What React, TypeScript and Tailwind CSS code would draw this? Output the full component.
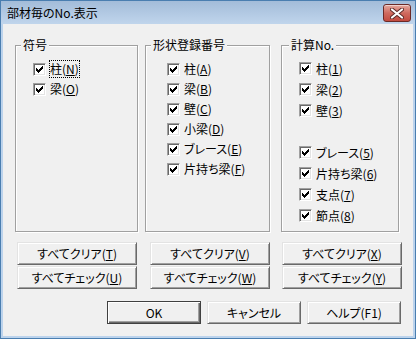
import React from "react";

const font = "font-['Noto_Sans_CJK_JP','Noto_Sans',sans-serif] [font-feature-settings:'palt'] text-[12px] leading-[16px] text-black";

function CheckMark() {
  const cols: [number, number][] = [
    [3, 5],
    [4, 6],
    [5, 7],
    [6, 6],
    [7, 5],
    [8, 4],
    [9, 3],
  ];
  return (
    <svg width="13" height="13" viewBox="0 0 13 13" shapeRendering="crispEdges" className="absolute left-[-1px] top-[-1px]">
      {cols.map(([x, y]) => (
        <rect key={x} x={x} y={y} width="1" height="3" fill="#000" />
      ))}
    </svg>
  );
}

function Check({ label, acc, suffix, focus }: { label: string; acc: string; suffix?: string; focus?: boolean }) {
  return (
    <div className="flex items-center">
      <div className="relative w-[13px] h-[13px] shrink-0 bg-white border border-t-[#a0a0a0] border-l-[#a0a0a0] border-b-white border-r-white shadow-[inset_1px_1px_0_#696969,inset_-1px_-1px_0_#e3e3e3]">
        <CheckMark />
      </div>
      <span
        className={
          "ml-[3px] border whitespace-nowrap " +
          (focus ? "border-dotted border-black" : "border-transparent")
        }
      >
        {label}(<u className="underline-offset-[1px]">{acc}</u>){suffix}
      </span>
    </div>
  );
}

function Group({
  title,
  titleLeft,
  className,
  children,
}: {
  title: string;
  titleLeft: string;
  className: string;
  children: React.ReactNode;
}) {
  return (
    <div
      className={
        "relative border border-[#a0a0a0] shadow-[inset_1px_1px_0_#fff,1px_1px_0_#fff] " + className
      }
    >
      <span className={"absolute top-[-9px] px-[2px] bg-[#f0f0f0] leading-[16px] whitespace-nowrap " + titleLeft}>
        {title}
      </span>
      {children}
    </div>
  );
}

function Btn({ children, w, def }: { children: React.ReactNode; w: string; def?: boolean }) {
  return (
    <div
      className={
        "flex items-center justify-center h-[23px] bg-[#f0f0f0] whitespace-nowrap " +
        w +
        " " +
        (def
          ? "border border-[#404040] shadow-[inset_1px_1px_0_#fff,inset_-1px_-1px_0_#696969,inset_-2px_-2px_0_#a0a0a0]"
          : "border border-t-[#e3e3e3] border-l-[#e3e3e3] border-b-[#696969] border-r-[#696969] shadow-[inset_1px_1px_0_#fff,inset_-1px_-1px_0_#a0a0a0]")
      }
    >
      {children}
    </div>
  );
}

export default function App() {
  return (
    <div className={"w-[416px] h-[339px] flex flex-col border border-[#4a7eb0] bg-[#bcd3ec] " + font}>
      <div className="h-[23px] shrink-0 flex items-center justify-between pl-[6px] pr-[4px] bg-gradient-to-b from-[#a3bcd9] to-[#c0d5ec]">
        <span className="text-[12px] leading-[16px] text-black">部材毎のNo.表示</span>
        <div className="w-[28px] h-[18px] mt-[1px] rounded-[3px] border border-[#6b2a27] bg-gradient-to-b from-[#e4a89f] via-[#cf6a5f] to-[#c24a3f] shadow-[inset_0_1px_0_rgba(255,255,255,0.5)] flex items-center justify-center">
          <svg width="14" height="11" viewBox="0 0 14 11">
            <path d="M2 1.5 L12 9.5 M12 1.5 L2 9.5" stroke="#5a2a28" strokeWidth="4" strokeLinecap="round" />
            <path d="M2 1.5 L12 9.5 M12 1.5 L2 9.5" stroke="#fff" strokeWidth="2.2" strokeLinecap="round" />
          </svg>
        </div>
      </div>
      <div className="flex-1 mx-[2px] mb-[2px] bg-[#f0f0f0] flex flex-col">
        <div className="flex pt-[21px] pl-[12px]">
          <Group title="符号" titleLeft="left-[5px]" className="w-[123px] h-[187px] pt-[13px] pl-[17px]">
            <div className="flex flex-col">
              <div className="h-[20px] flex items-center">
                <Check label="柱" acc="N" focus />
              </div>
              <div className="h-[20px] flex items-center">
                <Check label="梁" acc="O" />
              </div>
            </div>
          </Group>
          <Group title="形状登録番号" titleLeft="left-[5px]" className="ml-[7px] w-[125px] h-[187px] pt-[13px] pl-[21px]">
            <div className="flex flex-col">
              {[
                ["柱", "A"],
                ["梁", "B"],
                ["壁", "C"],
                ["小梁", "D"],
                ["ブレース", "E"],
                ["片持ち梁", "F"],
              ].map(([l, a]) => (
                <div key={a} className="h-[20px] flex items-center">
                  <Check label={l} acc={a} />
                </div>
              ))}
            </div>
          </Group>
          <Group title="計算No." titleLeft="left-[7px]" className="ml-[11px] w-[118px] h-[187px] pt-[12px] pl-[17px]">
            <div className="flex flex-col">
              {[
                ["柱", "1"],
                ["梁", "2"],
                ["壁", "3"],
              ].map(([l, a]) => (
                <div key={a} className="h-[21px] flex items-center">
                  <Check label={l} acc={a} />
                </div>
              ))}
              <div className="h-[21px]" />
              {[
                ["ブレース", "5"],
                ["片持ち梁", "6"],
                ["支点", "7"],
                ["節点", "8"],
              ].map(([l, a]) => (
                <div key={a} className="h-[21px] flex items-center">
                  <Check label={l} acc={a} />
                </div>
              ))}
            </div>
          </Group>
        </div>
        <div className="flex pl-[14px] mt-[10px]">
          {[
            ["T", "U"],
            ["V", "W"],
            ["X", "Y"],
          ].map(([c, k], i) => (
            <div key={c} className={"flex flex-col gap-[1px] " + (i === 0 ? "" : i === 1 ? "ml-[13px]" : "ml-[12px]")}>
              <Btn w="w-[120px]">
                すべてクリア(<u>{c}</u>)
              </Btn>
              <Btn w="w-[120px]">
                すべてチェック(<u>{k}</u>)
              </Btn>
            </div>
          ))}
        </div>
        <div className="flex justify-end gap-[6px] pr-[12px] mt-[12px]">
          <Btn w="w-[94px]" def>
            OK
          </Btn>
          <Btn w="w-[94px]">キャンセル</Btn>
          <Btn w="w-[94px]">ヘルプ(F1)</Btn>
        </div>
      </div>
    </div>
  );
}
